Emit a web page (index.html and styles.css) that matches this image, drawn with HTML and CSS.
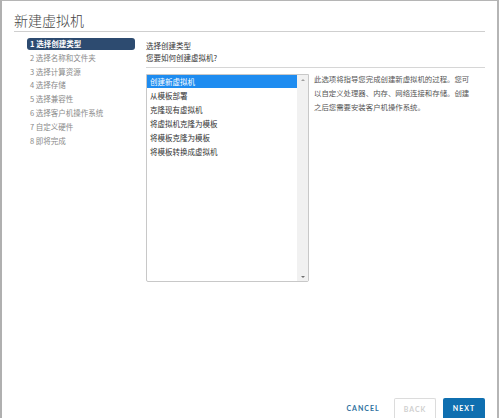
FILE: index.html
```html
<!DOCTYPE html>
<html lang="zh-CN">
<head>
<meta charset="utf-8">
<title>新建虚拟机</title>
<link rel="stylesheet" href="styles.css">
</head>
<body>
<div class="dialog">
  <div class="header"><h1 class="title">新建虚拟机</h1></div>
  <div class="main">
    <ul class="steps">
      <li class="step active">1 选择创建类型</li>
      <li class="step">2 选择名称和文件夹</li>
      <li class="step">3 选择计算资源</li>
      <li class="step">4 选择存储</li>
      <li class="step">5 选择兼容性</li>
      <li class="step">6 选择客户机操作系统</li>
      <li class="step">7 自定义硬件</li>
      <li class="step">8 即将完成</li>
    </ul>
    <div class="content">
      <div class="heading">
        <div class="heading-title">选择创建类型</div>
        <div class="heading-sub">您要如何创建虚拟机?</div>
      </div>
      <div class="row">
        <div class="listbox">
          <ul class="options">
            <li class="option selected">创建新虚拟机</li>
            <li class="option">从模板部署</li>
            <li class="option">克隆现有虚拟机</li>
            <li class="option">将虚拟机克隆为模板</li>
            <li class="option">将模板克隆为模板</li>
            <li class="option">将模板转换成虚拟机</li>
          </ul>
          <div class="scrollbar">
            <span class="arrow up"></span>
            <span class="arrow down"></span>
          </div>
        </div>
        <p class="desc">此选项将指导您完成创建新虚拟机的过程。您可以自定义处理器、内存、网络连接和存储。创建之后您需要安装客户机操作系统。</p>
      </div>
    </div>
  </div>
  <div class="footer">
    <button class="btn btn-link">CANCEL</button>
    <button class="btn btn-outline" disabled>BACK</button>
    <button class="btn btn-primary">NEXT</button>
  </div>
</div>
</body>
</html>
```
FILE: styles.css
```css
* { box-sizing: border-box; }
html, body { margin: 0; padding: 0; background: #fff; }
body {
  font-family: "Noto Sans CJK SC", "Noto Sans", sans-serif;
  width: 499px;
  height: 418px;
  overflow: hidden;
}
.dialog {
  width: 499px;
  height: 418px;
  border-top: 1px solid #b5b5b5;
  border-left: 2px solid #b0b0b0;
  border-right: 2px solid #b5b5b5;
  display: flex;
  flex-direction: column;
  background: #fff;
}
.header {
  margin: 0 12px 0 12px;
  padding-top: 9px;
  border-bottom: 1px solid #cfcfcf;
}
.title {
  margin: 0;
  font-size: 14px;
  line-height: 21px;
  font-weight: 300;
  color: #444;
}
.main {
  display: flex;
  padding-top: 6px;
}
.steps {
  list-style: none;
  margin: 0 0 0 25px;
  padding: 0;
  width: 108px;
}
.step {
  height: 12px;
  line-height: 12px;
  margin-bottom: 1.8px;
  padding-left: 3px;
  font-size: 7.5px;
  color: #8a8a8a;
  border-radius: 3px;
  white-space: nowrap;
}
.step.active {
  background: #2d4b70;
  color: #fff;
  font-weight: 700;
}
.content {
  margin-left: 11px;
  width: 339px;
  padding-top: 2px;
}
.heading {
  padding-bottom: 3px;
  border-bottom: 1px solid #d6d6d6;
  font-size: 7.5px;
  line-height: 12px;
  color: #333;
}
.row {
  display: flex;
  margin-top: 6px;
}
.listbox {
  width: 163px;
  height: 208px;
  border: 1px solid #c8c8c8;
  border-radius: 0 0 2px 2px;
  display: flex;
  flex-shrink: 0;
}
.options {
  list-style: none;
  margin: 0;
  padding: 0;
  flex: 1;
}
.option {
  height: 14px;
  line-height: 14px;
  padding-left: 3px;
  font-size: 7.5px;
  color: #333;
  white-space: nowrap;
}
.option.selected {
  height: 13px;
  line-height: 13px;
  margin-bottom: 1px;
  background: #1e8cf0;
  color: #fff;
}
.scrollbar {
  width: 11px;
  background: #f1f1f1;
  display: flex;
  flex-direction: column;
  justify-content: space-between;
  align-items: center;
  padding: 4px 0 3px;
}
.arrow {
  width: 0;
  height: 0;
  border-left: 2px solid transparent;
  border-right: 2px solid transparent;
}
.arrow.up { border-bottom: 2px solid #a0a0a0; }
.arrow.down { border-top: 2px solid #707070; }
.desc {
  margin: -2px 0 0 5px;
  width: 162px;
  font-size: 7.4px;
  line-height: 14px;
  color: #555;
}
.footer {
  margin-top: auto;
  display: flex;
  justify-content: flex-end;
  align-items: center;
  gap: 7px;
  padding-right: 12px;
}
.btn {
  height: 20px;
  font-family: "Lato", "Open Sans", sans-serif;
  font-size: 7px;
  font-weight: 700;
  letter-spacing: 1px;
  border-radius: 2px 2px 0 0;
  background: #fff;
  padding: 0;
}
.btn-link {
  border: none;
  color: #2e6f9e;
  width: 40px;
  margin-right: 4px;
}
.btn-outline {
  width: 42px;
  border: 1px solid #dcdcdc;
  border-bottom: none;
  color: #cfcfcf;
}
.btn-primary {
  width: 42px;
  border: none;
  background: #0f6fb0;
  color: #fff;
}
```
